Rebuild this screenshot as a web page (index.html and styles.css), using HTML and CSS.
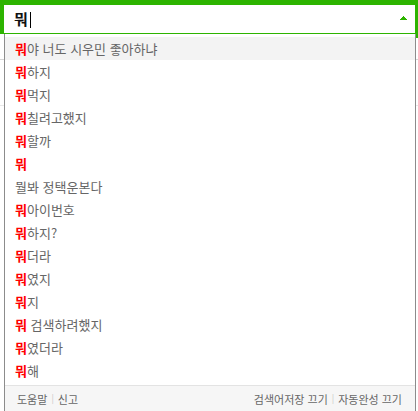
FILE: index.html
```html
<!DOCTYPE html>
<html lang="ko">
<head>
<meta charset="utf-8">
<link rel="stylesheet" href="styles.css">
</head>
<body>
<div class="page">
  <div class="search">
    <span class="query">뭐</span><span class="caret"></span>
    <svg class="toggle" width="7" height="4" viewBox="0 0 7 4" shape-rendering="crispEdges"><path d="M3 0h1v1h1v1h1v1h1v1H0V3h1V2h1V1h1z" fill="#2db400"/></svg>
  </div>
  <div class="backdrop">
    <div class="rule rule-a"></div>
    <div class="rule rule-b"></div>
  </div>
  <div class="suggest">
    <ul class="list">
      <li class="item active"><b>뭐</b>야 너도 시우민 좋아하냐</li>
      <li class="item"><b>뭐</b>하지</li>
      <li class="item"><b>뭐</b>먹지</li>
      <li class="item"><b>뭐</b>칠려고했지</li>
      <li class="item"><b>뭐</b>할까</li>
      <li class="item"><b>뭐</b></li>
      <li class="item">뭘봐 정택운본다</li>
      <li class="item"><b>뭐</b>아이번호</li>
      <li class="item"><b>뭐</b>하지?</li>
      <li class="item"><b>뭐</b>더라</li>
      <li class="item"><b>뭐</b>였지</li>
      <li class="item"><b>뭐</b>지</li>
      <li class="item"><b>뭐</b> 검색하려했지</li>
      <li class="item"><b>뭐</b>였더라</li>
      <li class="item"><b>뭐</b>해</li>
    </ul>
    <div class="foot">
      <div class="links"><span>도움말</span><i class="sep">|</i><span>신고</span></div>
      <div class="links"><span>검색어저장 끄기</span><i class="sep">|</i><span>자동완성 끄기</span></div>
    </div>
  </div>
</div>
</body>
</html>
```
FILE: styles.css
```css
* { box-sizing: border-box; }
html, body { margin: 0; padding: 0; background: #fff; }
body { font-family: "Noto Sans CJK KR", "Noto Sans", sans-serif; }
.page { position: relative; width: 418px; height: 411px; overflow: hidden; }

.search {
  position: relative;
  width: 418px;
  height: 34px;
  border: solid #2db400;
  border-width: 5px 3px 1px 4px;
  background: #fff;
  display: flex;
  align-items: center;
  padding: 0 8px 0 10px;
}
.search::after {
  content: "";
  position: absolute;
  top: 29px;
  right: -3px;
  width: 3px;
  height: 4px;
  background: #2db400;
}
.query { font-size: 15px; font-weight: 700; color: #111; line-height: 16px; }
.caret { width: 1px; height: 16px; background: #000; margin-left: 2px; margin-top: 1px; }
.toggle { margin-left: auto; margin-top: -2px; display: block; }

.backdrop { position: relative; height: 377px; }
.rule { height: 1px; background: #d6d6d6; }
.rule-a { margin-top: 25px; }
.rule-b { margin-top: 45px; background: #e8e8e8; }

.suggest {
  position: absolute;
  top: 34px;
  left: 4px;
  width: 412px;
  bottom: -10px;
  background: #fff;
  border-left: 1px solid #8c8c8c;
  border-right: 1px solid #8c8c8c;
  display: flex;
  flex-direction: column;
}
.list { list-style: none; margin: 0; padding: 3px 0 3px; }
.item {
  height: 23px;
  line-height: 23px;
  padding-left: 10px;
  font-size: 13px;
  color: #666;
  white-space: nowrap;
}
.item.active { background: #f3f3f3; }
.item b { color: #f00; font-weight: 700; }

.foot {
  flex: 1;
  border-top: 1px solid #e3e3e3;
  background: #f6f6f6;
  display: flex;
  justify-content: space-between;
  align-items: flex-start;
  padding: 4px 13px 0 12px;
  font-size: 11px;
  line-height: 18px;
  color: #666;
}
.links { display: flex; align-items: center; }
.sep { font-style: normal; color: #c8c8c8; font-size: 9px; margin: 0 4px; }
```
